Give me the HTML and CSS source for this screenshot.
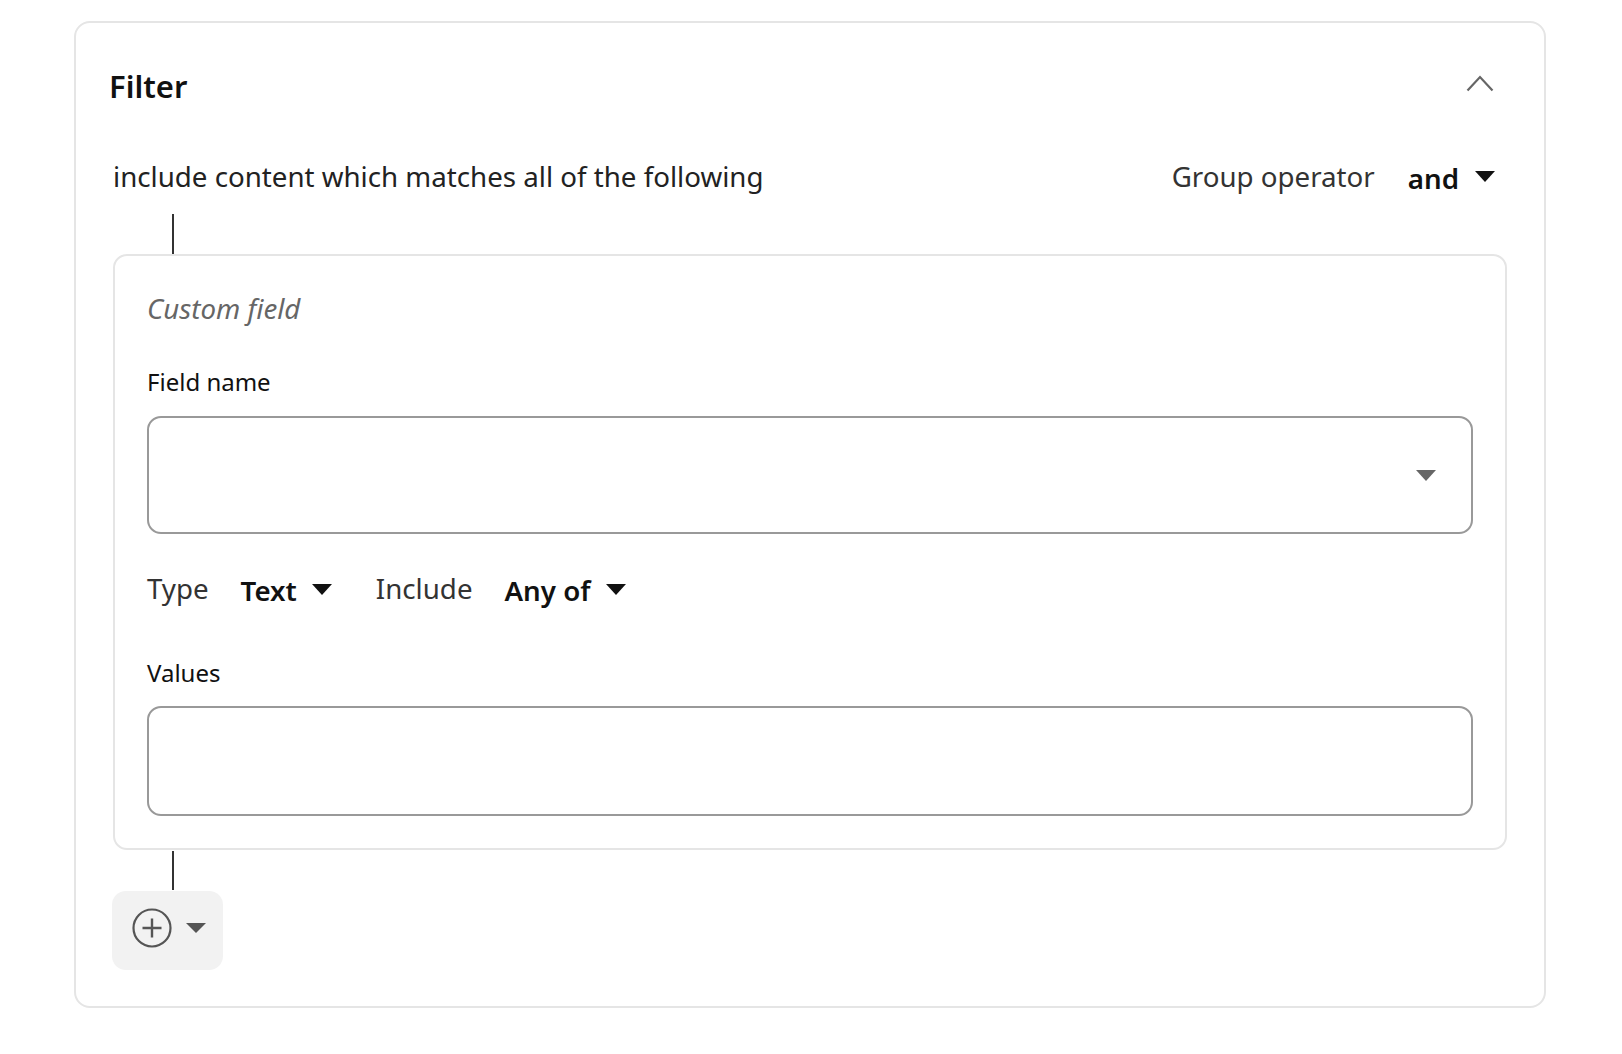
FILE: index.html
```html
<!DOCTYPE html>
<html lang="en">
<head>
<meta charset="utf-8">
<title>Filter</title>
<link rel="stylesheet" href="styles.css">
</head>
<body>
<div class="page">
  <section class="card">
    <header class="card-header">
      <h2 class="title">Filter</h2>
      <button class="collapse" aria-label="Collapse">
        <svg width="28" height="18" viewBox="0 0 28 18"><path d="M1.5 16.5 L14 3 L26.5 16.5" fill="none" stroke="#666" stroke-width="2.2"/></svg>
      </button>
    </header>
    <div class="summary">
      <span class="summary-text">include content which matches all of the following</span>
      <div class="operator">
        <span class="op-label">Group operator</span>
        <span class="op-value">and</span>
        <span class="tri dark"></span>
      </div>
    </div>
    <div class="connector top"></div>
    <div class="rule">
      <div class="rule-title">Custom field</div>
      <label class="field-label">Field name</label>
      <div class="input select"><span class="tri grey"></span></div>
      <div class="type-row">
        <span class="row-label">Type</span>
        <span class="row-value">Text</span>
        <span class="tri dark"></span>
        <span class="row-label include">Include</span>
        <span class="row-value">Any of</span>
        <span class="tri dark"></span>
      </div>
      <label class="field-label">Values</label>
      <div class="input values"></div>
    </div>
    <div class="connector bottom"></div>
    <button class="add-btn" aria-label="Add">
      <svg width="42" height="42" viewBox="0 0 42 42"><circle cx="21" cy="21" r="18.5" fill="none" stroke="#555" stroke-width="2.2"/><path d="M21 11.5 V30.5 M11.5 21 H30.5" stroke="#555" stroke-width="2.4"/></svg>
      <span class="tri grey small"></span>
    </button>
  </section>
</div>
</body>
</html>
```

FILE: styles.css
```css
* { box-sizing: border-box; }
html, body { margin: 0; padding: 0; background: #fff; }
body {
  font-family: "Noto Sans", "Open Sans", sans-serif;
  color: #222;
}
.page {
  padding: 21px 76px 40px 74px;
}
.card {
  border: 2px solid #e5e5e5;
  border-radius: 16px;
  padding: 41px 37px 36px 37px;
}
.card-header {
  display: flex;
  justify-content: space-between;
  align-items: center;
  height: 44px;
}
.title {
  margin: 0 0 0 -4px;
  font-size: 31px;
  line-height: 44px;
  font-weight: 600;
  color: #111;
}
.collapse {
  border: 0;
  background: none;
  padding: 0;
  margin: -6px 13px 0 0;
  width: 28px;
  height: 18px;
  display: flex;
}
.summary {
  margin-top: 49px;
  display: flex;
  justify-content: space-between;
  align-items: center;
  height: 38px;
}
.summary-text {
  font-size: 27.7px;
  line-height: 38px;
  color: #222;
}
.operator {
  display: flex;
  align-items: center;
  margin-right: 12px;
}
.op-label {
  font-size: 27.7px;
  line-height: 38px;
  color: #333;
}
.op-value {
  font-size: 27.7px;
  line-height: 38px;
  font-weight: 600;
  color: #111;
  margin-left: 33px;
  margin-right: 16px;
  position: relative;
  top: 1.5px;
}
.tri {
  display: inline-block;
  width: 0;
  height: 0;
  border-left: 10px solid transparent;
  border-right: 10px solid transparent;
  border-top: 11px solid #111;
}
.tri.grey { border-top-color: #666; }
.tri.small {
  border-top-width: 10px;
  border-top-color: #555;
}
.connector {
  width: 2px;
  background: #333;
  margin-left: 59px;
}
.connector.top { margin-top: 19px; height: 40px; }
.connector.bottom { margin-top: 1px; height: 39px; }
.rule {
  border: 2px solid #e5e5e5;
  border-radius: 14px;
  padding: 33px 32px 32px 32px;
}
.rule-title {
  font-size: 27.7px;
  line-height: 38px;
  font-style: italic;
  color: #666;
}
.field-label {
  display: block;
  font-size: 24px;
  line-height: 32px;
  color: #111;
  margin-top: 39px;
}
.input {
  margin-top: 18px;
  border: 2px solid #999;
  border-radius: 14px;
  background: #fff;
}
.input.select {
  height: 118px;
  display: flex;
  align-items: center;
  justify-content: flex-end;
  padding-right: 35px;
}
.input.values {
  height: 110px;
}
.field-label + .input.values { margin-top: 17px; }
.type-row {
  margin-top: 35px;
  display: flex;
  align-items: center;
  height: 38px;
}
.type-row + .field-label { margin-top: 50px; }
.row-label {
  font-size: 27.7px;
  line-height: 38px;
  color: #333;
  position: relative;
  top: 0;
}
.row-label.include { margin-left: 44px; }
.row-value {
  font-size: 27.7px;
  line-height: 38px;
  font-weight: 600;
  color: #111;
  margin-left: 32px;
  margin-right: 15px;
  position: relative;
  top: 2px;
}
.type-row .tri { position: relative; top: 1px; }
.add-btn {
  display: flex;
  align-items: center;
  border: 0;
  background: #f2f2f2;
  border-radius: 14px;
  width: 111px;
  height: 79px;
  padding: 0 0 5px 19px;
  margin-top: 1px;
  margin-left: -1px;
}
.add-btn .tri { margin-left: 13px; }
```
